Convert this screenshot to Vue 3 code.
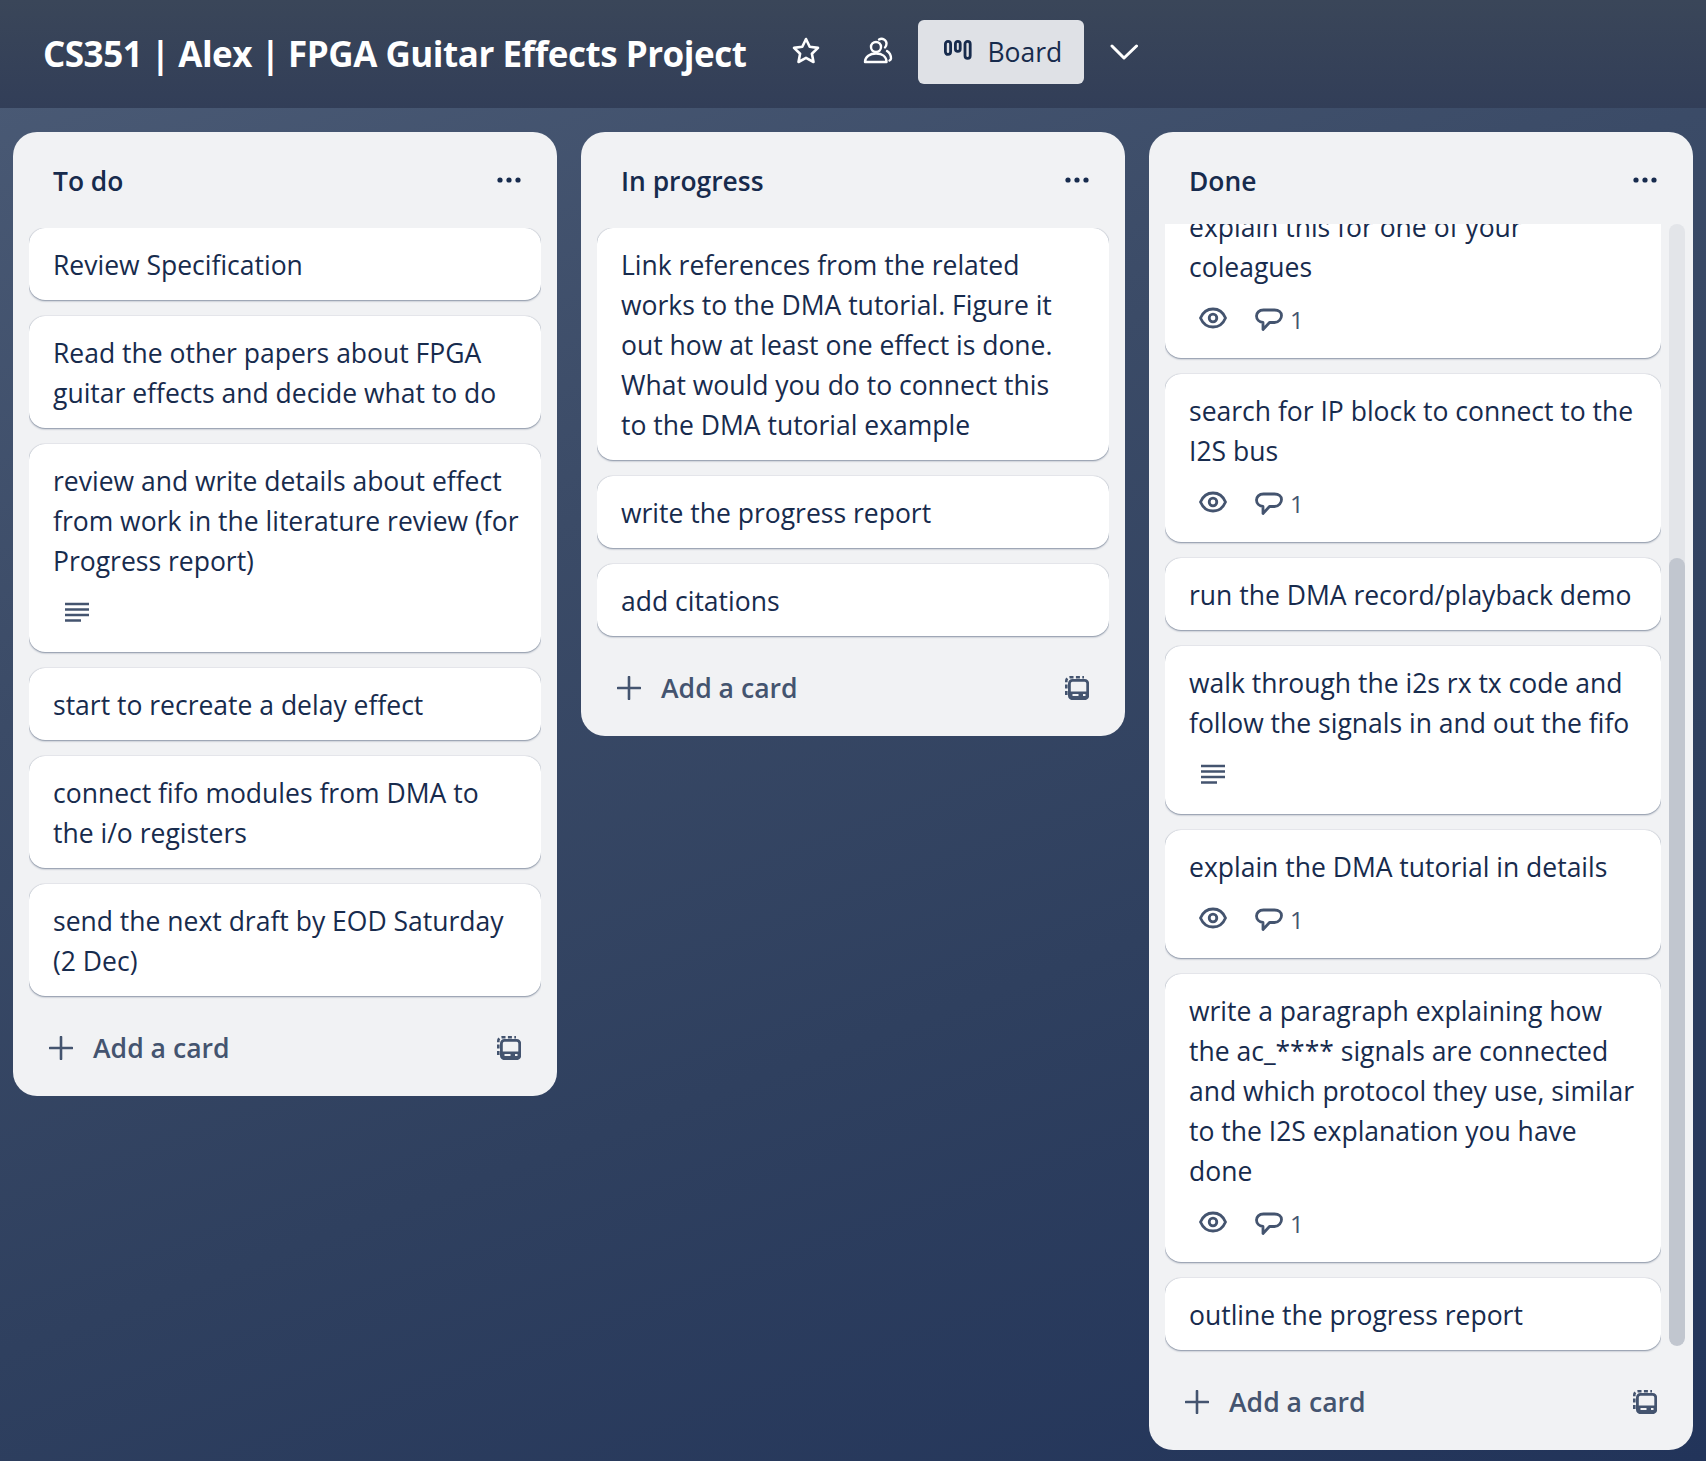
<template>
    <div class="board">
        <header class="board-header">
            <h1 class="title">CS351 | Alex | FPGA Guitar Effects Project</h1>
            <button class="icon-btn star">
                <svg width="32" height="32" viewBox="0 0 32 32" fill="none" stroke="#fff" stroke-width="2.6" stroke-linejoin="round">
                    <path d="M16 4l3.700 7.800 8.300 1.100-6.100 5.800 1.600 8.300-7.500-4.100-7.500 4.100 1.600-8.300L4 12.900l8.300-1.100z" />
                </svg>
            </button>
            <button class="icon-btn people">
                <svg width="32" height="32" viewBox="0 0 32 32" fill="none" stroke="#fff" stroke-width="2.400" stroke-linecap="round" stroke-linejoin="round">
                    <circle cx="14" cy="13" r="5" />
                    <path d="M3 28c0-5.500 5-8.500 11-8.500s10.500 3 10.500 8.500z" />
                    <path d="M17 5.500c3.500-2 7.500.5 7.500 4 0 1.700-.5 3-1.500 4" />
                    <path d="M25 17c2.500 1.500 4 4 4 7.500 0 1-.5 1.500-1.500 2" />
                </svg>
            </button>
            <button class="view-btn">
                <svg width="28" height="20" viewBox="0 0 28 20" fill="none" stroke="#172b4d" stroke-width="2.800">
                    <rect x="1.400" y="1.400" width="5.200" height="13" rx="2.600" />
                    <rect x="11.400" y="1.400" width="4.800" height="10" rx="2.400" />
                    <rect x="21" y="1.400" width="5.200" height="17" rx="2.600" />
                </svg>
                <span>Board</span>
            </button>
            <button class="icon-btn chevron">
                <svg width="28" height="16" viewBox="0 0 28 16" fill="none" stroke="#fff" stroke-width="3" stroke-linecap="round" stroke-linejoin="round">
                    <path d="M2 2l12 12L26.500 2" />
                </svg>
            </button>
        </header>

        <main class="lists">
            <section v-for="list in lists" :key="list.title" :class="['list', { scrolled: list.scrolled }]">
                <div class="list-head">
                    <h2 class="list-title">{{ list.title }}</h2>
                    <svg class="dots" width="24" height="6" viewBox="0 0 24 6" fill="#172b4d">
                        <circle cx="3" cy="3" r="2.600" />
                        <circle cx="12" cy="3" r="2.600" />
                        <circle cx="21" cy="3" r="2.600" />
                    </svg>
                </div>

                <div class="list-body">
                    <div class="cards">
                        <article v-for="card in list.cards" :key="card.text" class="card">
                            <p class="card-text">{{ card.text }}</p>
                            <div v-if="card.desc" class="badges">
                                <svg class="desc-icon" width="26" height="20" viewBox="0 0 26 20" stroke="#44546f" stroke-width="2.400">
                                    <path d="M1 2h24M1 7.500h24M1 13h24M1 18.500h16" />
                                </svg>
                            </div>
                            <div v-if="card.comments" class="badges">
                                <svg class="eye-icon" width="28" height="22" viewBox="0 0 28 22" fill="none" stroke="#44546f" stroke-width="2.800">
                                    <path d="M1.500 11C4 5 8.500 2 14 2s10 3 12.500 9C24 17 19.500 20 14 20S4 17 1.500 11z" />
                                    <circle cx="14" cy="11" r="3.800" />
                                </svg>
                                <svg class="comment-icon" width="28" height="24" viewBox="0 0 28 24" fill="none" stroke="#44546f" stroke-width="2.800" stroke-linejoin="round">
                                    <path d="M8.500 2h11C24 2 26.500 4.500 26.500 7.500S24 14.500 19.500 14.500h-5L8 21.500v-7C4 14 1.500 11 1.500 8S4 2 8.500 2z" />
                                </svg>
                                <span class="count">{{ card.comments }}</span>
                            </div>
                        </article>
                    </div>
                    <div v-if="list.scrolled" class="scrollbar">
                        <div class="thumb"></div>
                    </div>
                </div>

                <div class="list-foot">
                    <svg class="plus" width="24" height="24" viewBox="0 0 24 24" stroke="#44546f" stroke-width="2.600" stroke-linecap="round">
                        <path d="M12 1v22M1 12h22" />
                    </svg>
                    <span class="add-label">Add a card</span>
                    <svg class="template" width="24" height="24" viewBox="0 0 24 24" fill="none">
                        <path d="M1.300 19V5C1.300 2.900 2.900 1.300 5 1.300h14" stroke="#44546f" stroke-width="2.600" stroke-dasharray="4 2.400" />
                        <rect x="4.400" y="4.400" width="18.300" height="18.300" rx="3" stroke="#44546f" stroke-width="2.800" />
                        <path d="M4.400 15.500h18.300v4.200c0 1.700-1.300 3-3 3H7.400c-1.700 0-3-1.300-3-3z" fill="#44546f" />
                        <path d="M7.500 19h6M18 19h2.500" stroke="#f1f2f4" stroke-width="2" />
                    </svg>
                </div>
            </section>
        </main>
    </div>
</template>

<script setup>
const lists = [
    {
        title: 'To do',
        cards: [
            { text: 'Review Specification' },
            { text: 'Read the other papers about FPGA\nguitar effects and decide what to do' },
            {
                text: 'review and write details about effect\nfrom work in the literature review (for\nProgress report)',
                desc: true,
            },
            { text: 'start to recreate a delay effect' },
            { text: 'connect fifo modules from DMA to\nthe i/o registers' },
            { text: 'send the next draft by EOD Saturday\n(2 Dec)' },
        ],
    },
    {
        title: 'In progress',
        cards: [
            {
                text: 'Link references from the related\nworks to the DMA tutorial. Figure it\nout how at least one effect is done.\nWhat would you do to connect this\nto the DMA tutorial example',
            },
            { text: 'write the progress report' },
            { text: 'add citations' },
        ],
    },
    {
        title: 'Done',
        scrolled: true,
        cards: [
            { text: 'explain this for one of your\ncoleagues', comments: 1 },
            { text: 'search for IP block to connect to the\nI2S bus', comments: 1 },
            { text: 'run the DMA record/playback demo' },
            { text: 'walk through the i2s rx tx code and\nfollow the signals in and out the fifo', desc: true },
            { text: 'explain the DMA tutorial in details', comments: 1 },
            {
                text: 'write a paragraph explaining how\nthe ac_**** signals are connected\nand which protocol they use, similar\nto the I2S explanation you have\ndone',
                comments: 1,
            },
            { text: 'outline the progress report' },
        ],
    },
];
</script>

<style>
html,
body {
    margin: 0;
    background: #22345a;
}
</style>

<style scoped>
.board {
    width: 1706px;
    height: 1461px;
    overflow: hidden;
    display: flex;
    flex-direction: column;
    font-family: "Open Sans", "Noto Sans", sans-serif;
    color: #172b4d;
    background: linear-gradient(160deg, #4b5b76 0%, #3b4b67 35%, #2f405f 65%, #22345a 100%);
}

.board-header {
    height: 108px;
    box-sizing: border-box;
    padding: 20px 0 24px 43px;
    display: flex;
    align-items: center;
    flex-shrink: 0;
    background: linear-gradient(180deg, #3a4659, #323e58);
}

.title {
    margin: 4px 0 0;
    font-size: 35px;
    letter-spacing: -0.48px;
    line-height: 58px;
    font-weight: 700;
    color: #fff;
    white-space: nowrap;
}

.icon-btn {
    padding: 0;
    border: 0;
    background: none;
    display: flex;
}

.star {
    margin-left: 44px;
    margin-top: -3px;
}

.people {
    margin-left: 40px;
    margin-top: -4px;
}

.view-btn {
    width: 166px;
    height: 64px;
    margin-left: 24px;
    padding: 0 0 0 26px;
    border: 0;
    border-radius: 6px;
    background: #dfe1e6;
    color: #172b4d;
    display: flex;
    align-items: center;
    gap: 15px;
    font: inherit;
    font-size: 26.5px;
}

.view-btn svg {
    margin-top: -4px;
}

.chevron {
    margin-left: 26px;
}

.lists {
    flex: 1;
    min-height: 0;
    padding: 24px 13px 11px;
    display: flex;
    align-items: flex-start;
    gap: 24px;
}

.list {
    width: 544px;
    max-height: 100%;
    flex-shrink: 0;
    box-sizing: border-box;
    padding: 0 16px;
    border-radius: 24px;
    background: #f1f2f4;
    display: flex;
    flex-direction: column;
}

.list.scrolled {
    padding-right: 8px;
}

.list-head {
    height: 96px;
    padding: 0 20px 0 24px;
    display: flex;
    align-items: center;
    justify-content: space-between;
    flex-shrink: 0;
}

.scrolled .list-head {
    margin-bottom: -4px;
    padding-right: 28px;
}

.list-title {
    margin: 2px 0 0;
    font-size: 26.4px;
    line-height: 40px;
    font-weight: 600;
}

.list-body {
    flex: 1;
    min-height: 0;
    display: flex;
    gap: 8px;
}

.cards {
    flex: 1;
    min-width: 0;
    display: flex;
    flex-direction: column;
    gap: 16px;
    overflow: hidden;
    padding-bottom: 4px;
}

.scrolled .card:first-child {
    margin-top: -34px;
}

.card {
    flex-shrink: 0;
    box-sizing: border-box;
    padding: 17px 0 15px 24px;
    border-radius: 16px;
    background: #fff;
    box-shadow: 0 1px 2px rgba(9, 30, 66, 0.45), 0 0 1px rgba(9, 30, 66, 0.3);
}

.card-text {
    margin: 0;
    font-size: 26.5px;
    line-height: 40px;
    white-space: pre-line;
}

.badges {
    height: 48px;
    margin-top: 7px;
    margin-bottom: 1px;
    display: flex;
    align-items: center;
    color: #44546f;
}

.desc-icon {
    margin-left: 11px;
}

.eye-icon {
    margin-left: 10px;
}

.comment-icon {
    margin-left: 28px;
    margin-top: 4px;
}

.count {
    margin-left: 7px;
    margin-top: 4px;
    font-size: 24px;
    line-height: 32px;
}

.scrollbar {
    width: 16px;
    flex-shrink: 0;
    margin-bottom: 8px;
    border-radius: 8px;
    background: #e3e5e9;
    overflow: hidden;
}

.thumb {
    height: 788px;
    margin-top: 334px;
    border-radius: 8px;
    background: #c1c6cf;
}

.list-foot {
    height: 96px;
    box-sizing: border-box;
    padding: 0 20px;
    display: flex;
    align-items: center;
    flex-shrink: 0;
}

.scrolled .list-foot {
    margin-right: 8px;
}

.add-label {
    margin-left: 20px;
    font-size: 26.6px;
    font-weight: 600;
    color: #44546f;
}

.template {
    margin-left: auto;
}
</style>
